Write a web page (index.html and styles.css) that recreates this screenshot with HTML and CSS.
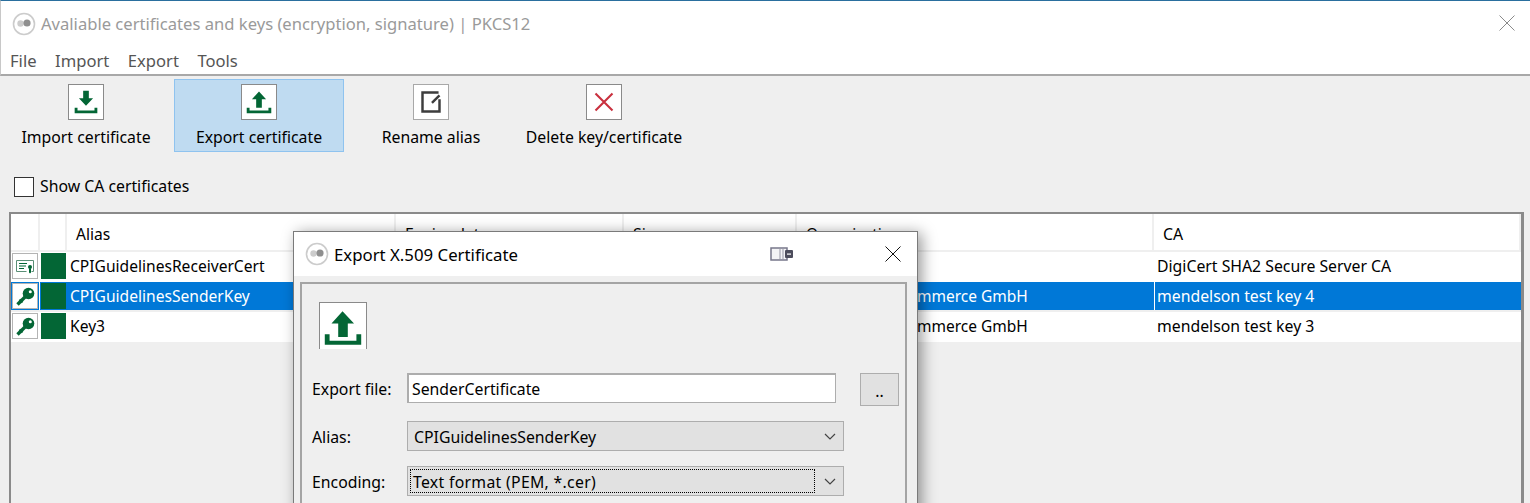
FILE: index.html
```html
<!DOCTYPE html>
<html lang="en">
<head>
  <meta charset="UTF-8" />
  <title>Avaliable certificates and keys</title>
  <link rel="stylesheet" href="styles.css">
</head>
<body>
  <svg class="defs" width="0" height="0">
    <symbol id="app" viewBox="0 0 24 24">
      <circle cx="12" cy="12" r="10.5" fill="#fff" stroke="#ccc" stroke-width="1.6"/>
      <circle cx="8.5" cy="11.5" r="3.2" fill="#ccc"/>
      <circle cx="15" cy="11" r="3.6" fill="#8f8f8f"/>
    </symbol>
    <symbol id="key" viewBox="0 0 24 24">
      <circle cx="15.500" cy="9.500" r="5.800" fill="#036635"/>
      <path d="M12 13L4.500 20.500" stroke="#036635" stroke-width="3.400" fill="none"/>
      <path d="M6.500 15.500l3 3" stroke="#036635" stroke-width="2" fill="none"/>
      <circle cx="17.300" cy="7.800" r="1.500" fill="#fff"/>
    </symbol>
  </svg>

  <div class="titlebar">
    <svg class="app-icon"><use href="#app"/></svg>
    <span class="title">Avaliable certificates and keys (encryption, signature) | PKCS12</span>
    <svg class="close" viewBox="0 0 16 16"><path d="M0.500 0.500L15.500 15.500M15.500 0.500L0.500 15.500" stroke="#8a8a8a" fill="none"/></svg>
  </div>

  <div class="menubar">
    <span>File</span><span>Import</span><span>Export</span><span>Tools</span>
  </div>

  <div class="toolbar">
    <div class="tool">
      <div class="tool-icon">
        <svg viewBox="0 0 36 36"><path d="M15 6h6v8h4.500L18 22l-7.500-8H15Z M6 24h3v3h18v-3h3v6H6Z" fill="#036635"/></svg>
      </div>
      <span>Import certificate</span>
    </div>
    <div class="tool active">
      <div class="tool-icon">
        <svg viewBox="0 0 36 36"><path d="M18 7l7.500 8H21v9h-6v-9h-4.500Z M5 24h3v3h20v-3h3v6H5Z" fill="#036635"/></svg>
      </div>
      <span>Export certificate</span>
    </div>
    <div class="tool shifted">
      <div class="tool-icon light">
        <svg viewBox="0 0 36 36"><path d="M26 8H9v20h18V15M27 11l-8 8" fill="none" stroke="#3d3d3d" stroke-width="2.600"/></svg>
      </div>
      <span>Rename alias</span>
    </div>
    <div class="tool">
      <div class="tool-icon">
        <svg viewBox="0 0 36 36"><path d="M9 9l18 18M27 9L9 27" fill="none" stroke="#c9303e" stroke-width="2.200"/></svg>
      </div>
      <span>Delete key/certificate</span>
    </div>
  </div>

  <label class="show-ca"><span class="checkbox"></span><span class="show-ca-text">Show CA certificates</span></label>

  <div class="table">
    <div class="row head">
      <div class="cell c-icon"></div>
      <div class="cell c-flag"></div>
      <div class="cell c-alias">Alias</div>
      <div class="cell c-date">Expire date</div>
      <div class="cell c-size">Size</div>
      <div class="cell c-org">Organization</div>
      <div class="cell c-ca">CA</div>
    </div>
    <div class="row">
      <div class="cell c-icon"><span class="type-icon">
        <svg viewBox="0 0 24 24"><path d="M3.500 6.500h17v11h-2M3.500 6.500v11h10" fill="none" stroke="#5b8f76" stroke-width="1"/><path d="M6 9.500h8M6 12h7M6 14.500h5" stroke="#036635" stroke-width="1"/><circle cx="17" cy="13" r="2" fill="#036635"/><path d="M16 14.500h2v5l-1-1-1 1Z" fill="#036635"/></svg>
      </span></div>
      <div class="cell c-flag"><span class="flag"></span></div>
      <div class="cell c-alias">CPIGuidelinesReceiverCert</div>
      <div class="cell c-date"></div>
      <div class="cell c-size"></div>
      <div class="cell c-org"></div>
      <div class="cell c-ca">DigiCert SHA2 Secure Server CA</div>
    </div>
    <div class="row selected">
      <div class="cell c-icon"><span class="type-icon"><svg viewBox="0 0 24 24"><use href="#key"/></svg></span></div>
      <div class="cell c-flag"><span class="flag"></span></div>
      <div class="cell c-alias">CPIGuidelinesSenderKey</div>
      <div class="cell c-date"></div>
      <div class="cell c-size"></div>
      <div class="cell c-org">mendelson-e-commerce GmbH</div>
      <div class="cell c-ca">mendelson test key 4</div>
    </div>
    <div class="row">
      <div class="cell c-icon"><span class="type-icon"><svg viewBox="0 0 24 24"><use href="#key"/></svg></span></div>
      <div class="cell c-flag"><span class="flag"></span></div>
      <div class="cell c-alias">Key3</div>
      <div class="cell c-date"></div>
      <div class="cell c-size"></div>
      <div class="cell c-org">mendelson-e-commerce GmbH</div>
      <div class="cell c-ca">mendelson test key 3</div>
    </div>
  </div>

  <!-- Export dialog, floats over the table -->
  <div class="dialog">
    <div class="dialog-title">
      <svg class="app-icon"><use href="#app"/></svg>
      <span class="dialog-name">Export X.509 Certificate</span>
      <svg class="usb" viewBox="0 0 24 14"><rect x="1" y="1" width="16" height="12" fill="#f4f4f6" stroke="#77778a" stroke-width="1.500"/><path d="M10 2v10M13 2v10" stroke="#b5b5c0" stroke-width="1.500"/><rect x="15" y="3" width="8" height="8" rx="1" fill="#4d4d5c"/><rect x="17" y="6.500" width="4" height="1.200" fill="#fff"/></svg>
      <svg class="dialog-close" viewBox="0 0 16 16"><path d="M0.500 0.500L15.500 15.500M15.500 0.500L0.500 15.500" stroke="#111" fill="none"/></svg>
    </div>
    <div class="panel">
      <div class="panel-icon">
        <svg viewBox="0 0 48 48"><path d="M23.500 8.500l12 13H29v14H19v-14h-7Z M5 32.500h5v7h28v-7h5v11H5Z" fill="#036635"/></svg>
      </div>
      <div class="form-row first">
        <span class="form-label">Export file:</span>
        <div class="text-input">SenderCertificate</div>
        <div class="browse">..</div>
      </div>
      <div class="form-row">
        <span class="form-label">Alias:</span>
        <div class="combo"><span class="combo-text">CPIGuidelinesSenderKey</span><svg class="chevron" viewBox="0 0 12 7"><path d="M1 1l5 5 5-5" fill="none" stroke="#444" stroke-width="1.200"/></svg></div>
      </div>
      <div class="form-row">
        <span class="form-label">Encoding:</span>
        <div class="combo"><span class="combo-text focused">Text format (PEM, *.cer)</span><svg class="chevron" viewBox="0 0 12 7"><path d="M1 1l5 5 5-5" fill="none" stroke="#444" stroke-width="1.200"/></svg></div>
      </div>
    </div>
  </div>
</body>
</html>
```

FILE: styles.css
```css
* {
  box-sizing: border-box;
}

html,
body {
  height: 503px;
  margin: 0;
  overflow: hidden;
}

body {
  position: relative;
  background-color: #efefef;
  color: #000;
  font-family: "Noto Sans", "Open Sans", sans-serif;
  font-size: 15.8px;
}

.defs {
  position: absolute;
}

.app-icon {
  width: 24px;
  height: 24px;
  flex: none;
}

/* Main window head */
.titlebar {
  display: flex;
  align-items: center;
  height: 46px;
  padding: 0 14px 0 11px;
  background: #fff;
  border-top: 1px solid #2a6f9e;
  border-left: 1px solid #c8c8c8;
  color: #9a9a9a;
  font-size: 16.6px;
}

.title {
  margin-left: 5px;
  flex-grow: 1;
}

.close {
  width: 16px;
  height: 16px;
  margin-top: -2px;
  margin-right: 1px;
}

.menubar {
  display: flex;
  gap: 18.500px;
  align-items: center;
  height: 30px;
  padding: 0 0 0 9px;
  background: #fff;
  border-left: 1px solid #c8c8c8;
  border-bottom: 2px solid #a8a8a8;
  color: #555;
  font-size: 16.6px;
}

/* Toolbar */
.toolbar {
  display: flex;
  gap: 3px;
  padding: 3px 0 0 1px;
}

.tool {
  display: flex;
  flex-direction: column;
  align-items: center;
  width: 170px;
  height: 73px;
  padding-top: 4px;
  border: 1px solid transparent;
}

.tool.shifted {
  margin-left: -1px;
}

.tool.active {
  background: #bfdbf1;
  border-color: #8fc3ef;
}

.tool-icon {
  width: 36px;
  height: 36px;
  margin-bottom: 6px;
  background: #fff;
  border: 1px solid #8a8a8a;
}

.tool-icon.light {
  border-color: #a8a8a8;
}

.tool-icon svg {
  display: block;
  width: 34px;
  height: 34px;
}

.show-ca {
  display: flex;
  align-items: center;
  gap: 6px;
  height: 20px;
  margin: 25px 0 15px 14px;
}

.show-ca-text {
  margin-top: -2px;
}

.checkbox {
  width: 20px;
  height: 20px;
  background: #fff;
  border: 1px solid #333;
}

/* Certificate table */
.table {
  width: 1515px;
  height: 291px;
  margin-left: 9px;
  border: 2px solid #8a8a8a;
  border-bottom: none;
  border-right-width: 3px;
}

.row {
  display: flex;
  height: 30px;
  background: #fff;
  line-height: 28px;
}

.row.head {
  height: 38px;
  line-height: 41px;
  border-bottom: 2px solid #efefef;
}

.head .cell {
  border-right: 2px solid #efefef;
  padding-left: 9px;
}

.cell {
  padding-left: 3px;
  white-space: nowrap;
  overflow: hidden;
  flex: none;
}

.c-icon {
  width: 29px;
  padding: 1px 0 0 1px;
}

.c-flag {
  width: 27px;
  padding: 1px 0 0 1px;
}

.c-alias {
  width: 329px;
  font-size: 15.6px;
}

.c-date {
  width: 228px;
}

.c-size {
  width: 173px;
}

.c-org {
  width: 357px;
  font-size: 15.5px;
}

.c-ca {
  width: 367px;
}

.head .c-icon,
.head .c-flag {
  padding: 0;
}

.row.selected {
  height: 28px;
  margin-bottom: 2px;
  background: #0078d7;
  color: #fff;
}

.row.selected .c-icon,
.row.selected .c-flag {
  background: #fff;
}

.row.selected .c-ca {
  border-left: 1px solid #fff;
  padding-left: 2px;
}

.row.selected .type-icon,
.row.selected .flag {
  outline: 1px solid #0078d7;
}

.type-icon {
  display: block;
  width: 26px;
  height: 26px;
  background: #fff;
  border: 1px solid #b4b4b4;
}

.type-icon svg {
  display: block;
  width: 24px;
  height: 24px;
}

.flag {
  display: block;
  width: 25px;
  height: 26px;
  background: #036635;
}

/* Export dialog */
.dialog {
  position: absolute;
  left: 293px;
  top: 231px;
  width: 625px;
  height: 290px;
  background: #efefef;
  border: 1px solid #7a7a7a;
  box-shadow: 4px 2px 14px rgba(0, 0, 0, 0.4);
}

.dialog-title {
  display: flex;
  align-items: center;
  height: 44px;
  padding: 0 16px 0 11px;
  background: #fff;
  font-size: 16.8px;
}

.dialog-name {
  margin-left: 5px;
  width: 436px;
}

.usb {
  width: 24px;
  height: 14px;
}

.dialog-close {
  width: 16px;
  height: 16px;
  margin-left: 91px;
}

.panel {
  width: 607px;
  height: 240px;
  margin: 6px 0 0 6px;
  padding: 18px 0 0 10px;
  border: 2px solid #a4a4a4;
  border-bottom: none;
}

.panel-icon {
  width: 48px;
  height: 47px;
  margin-left: 7px;
  background: #fff;
  border: 1px solid #8a8a8a;
  border-bottom: none;
}

.panel-icon svg {
  display: block;
  width: 46px;
  height: 46px;
}

.form-row {
  display: flex;
  align-items: flex-start;
  height: 33px;
  margin-top: 12px;
}

.form-row.first {
  margin-top: 24px;
  margin-bottom: 15px;
}

.form-label {
  width: 95px;
  line-height: 32px;
}

.text-input {
  width: 429px;
  height: 30px;
  padding-left: 3px;
  background: #fff;
  border: 1px solid #adadad;
  border-top-width: 2px;
  border-left-width: 2px;
  line-height: 28px;
}

.browse {
  width: 39px;
  height: 33px;
  margin-left: 24px;
  background: #e1e1e1;
  border: 1px solid #adadad;
  text-align: center;
  line-height: 34px;
}

.combo {
  display: flex;
  align-items: center;
  width: 437px;
  height: 30px;
  padding: 2px;
  background: #e1e1e1;
  border: 1px solid #adadad;
}

.combo-text {
  width: 405px;
  height: 24px;
  padding-left: 3px;
  border: 1px solid transparent;
  line-height: 24px;
}

.combo-text.focused {
  padding-left: 2px;
  border: 1px dotted #000;
  letter-spacing: 0.3px;
}

.chevron {
  width: 12px;
  height: 7px;
  margin-left: 9px;
}
```
